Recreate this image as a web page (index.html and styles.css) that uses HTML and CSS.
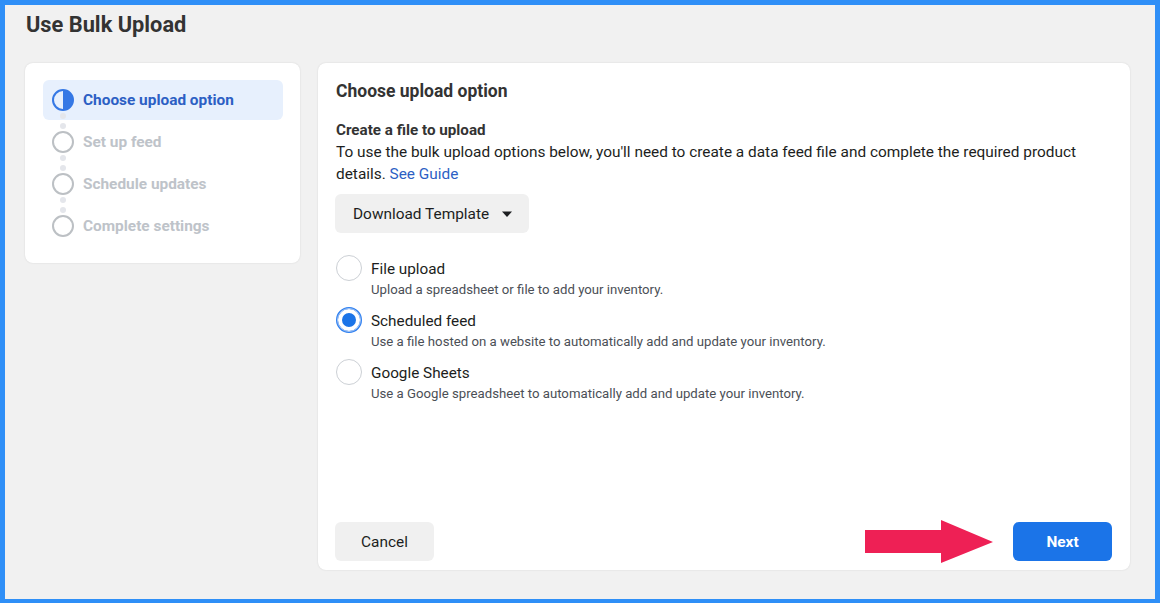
FILE: index.html
```html
<!DOCTYPE html>
<html>
<head>
<meta charset="utf-8">
<link rel="stylesheet" href="styles.css">
</head>
<body>
<div class="frame">
  <h1 class="page-title">Use Bulk Upload</h1>
  <div class="layout">
    <aside class="card steps">
      <div class="step active">
        <svg class="step-icon" width="22" height="22" viewBox="0 0 22 22"><circle cx="11" cy="11" r="10" fill="none" stroke="#3578e5" stroke-width="2"/><path d="M11 1 A10 10 0 0 1 11 21 Z" fill="#3578e5"/></svg>
        <span>Choose upload option</span>
      </div>
      <div class="connector"><i></i><i></i></div>
      <div class="step">
        <svg class="step-icon" width="22" height="22" viewBox="0 0 22 22"><circle cx="11" cy="11" r="10" fill="none" stroke="#bcc0c4" stroke-width="2"/></svg>
        <span>Set up feed</span>
      </div>
      <div class="connector"><i></i><i></i></div>
      <div class="step">
        <svg class="step-icon" width="22" height="22" viewBox="0 0 22 22"><circle cx="11" cy="11" r="10" fill="none" stroke="#bcc0c4" stroke-width="2"/></svg>
        <span>Schedule updates</span>
      </div>
      <div class="connector"><i></i><i></i></div>
      <div class="step">
        <svg class="step-icon" width="22" height="22" viewBox="0 0 22 22"><circle cx="11" cy="11" r="10" fill="none" stroke="#bcc0c4" stroke-width="2"/></svg>
        <span>Complete settings</span>
      </div>
    </aside>
    <main class="card content">
      <div class="content-body">
        <h2 class="section-title">Choose upload option</h2>
        <h3 class="sub-title">Create a file to upload</h3>
        <p class="desc">To use the bulk upload options below, you'll need to create a data feed file and complete the required product details. <span class="link">See Guide</span></p>
        <button class="btn btn-gray dl-btn">Download Template <svg width="12" height="8" viewBox="0 0 12 8"><path d="M1 1.5 L11 1.5 L6 7 Z" fill="#1c1e21"/></svg></button>
        <div class="options">
          <div class="option">
            <span class="radio"></span>
            <div class="opt-text">
              <div class="opt-label">File upload</div>
              <div class="opt-desc">Upload a spreadsheet or file to add your inventory.</div>
            </div>
          </div>
          <div class="option">
            <span class="radio checked"></span>
            <div class="opt-text">
              <div class="opt-label">Scheduled feed</div>
              <div class="opt-desc">Use a file hosted on a website to automatically add and update your inventory.</div>
            </div>
          </div>
          <div class="option">
            <span class="radio"></span>
            <div class="opt-text">
              <div class="opt-label">Google Sheets</div>
              <div class="opt-desc">Use a Google spreadsheet to automatically add and update your inventory.</div>
            </div>
          </div>
        </div>
      </div>
      <div class="footer">
        <button class="btn btn-gray btn-wide">Cancel</button>
        <div class="next-wrap">
          <svg class="arrow" width="128" height="43" viewBox="0 0 128 43"><path d="M0 10 L76 10 L76 0 L128 22 L76 43 L76 33 L0 33 Z" fill="#ee2055"/></svg>
          <button class="btn btn-blue btn-wide">Next</button>
        </div>
      </div>
    </main>
  </div>
</div>
</body>
</html>
```

FILE: styles.css
```css
* { box-sizing: border-box; }
html, body { margin: 0; padding: 0; }
body {
  width: 1160px;
  height: 603px;
  font-family: Roboto, "Liberation Sans", Arial, sans-serif;
  color: #1c1e21;
  overflow: hidden;
}
.frame {
  width: 1160px;
  height: 603px;
  border: 5px solid #2f8ff7;
  border-bottom-width: 4px;
  background: #f1f1f1;
  padding: 7px 25px 29px 20px;
  display: flex;
  flex-direction: column;
}
.page-title {
  margin: 0 0 0 1px;
  font-size: 21.8px;
  line-height: 26px;
  font-weight: 700;
  color: #333;
  height: 51px;
}
.layout {
  flex: 1;
  display: flex;
  gap: 18px;
  align-items: flex-start;
  min-height: 0;
}
.card {
  background: #fff;
  border-radius: 8px;
  box-shadow: 0 0 2px rgba(0,0,0,0.12);
}
.steps {
  width: 275px;
  padding: 17px 17px 17px 18px;
}
.step {
  height: 40px;
  display: flex;
  align-items: center;
  padding-left: 9px;
  gap: 9px;
  border-radius: 6px;
  font-size: 15.4px;
  font-weight: 700;
  color: #bec3c9;
}
.step.active {
  background: #e7f0fd;
  color: #2c5fc4;
}
.step-icon { flex: none; }
.connector {
  position: relative;
  height: 2px;
}
.connector i {
  position: absolute;
  left: 17px;
  width: 6px;
  height: 6px;
  border-radius: 50%;
  background: #e4e6eb;
}
.connector i:first-child { top: -7px; }
.connector i:last-child { top: 3px; }
.content {
  flex: 1;
  align-self: stretch;
  display: flex;
  flex-direction: column;
  padding: 17px 18px 9px 18px;
}
.content-body { flex: 1; }
.section-title {
  margin: 0 0 17px;
  font-size: 17.5px;
  line-height: 22px;
  font-weight: 700;
  color: #333;
}
.sub-title {
  margin: 0;
  font-size: 15.2px;
  line-height: 22px;
  font-weight: 700;
  color: #333;
}
.desc {
  margin: 0 0 9px;
  font-size: 15.4px;
  line-height: 22px;
  color: #1c1e21;
}
.link { color: #2d5fc4; }
.btn {
  border: none;
  border-radius: 6px;
  font-family: inherit;
  height: 39px;
  font-size: 15.4px;
  cursor: pointer;
}
.btn-gray { background: #f0f0f0; color: #1c1e21; }
.btn-blue { background: #1b74e8; color: #fff; font-weight: 700; }
.btn-wide { width: 99px; }
.dl-btn {
  display: inline-flex;
  align-items: center;
  gap: 12px;
  padding: 0 16px 0 18px;
  margin-left: -1px;
}
.options {
  margin-top: 22px;
  display: flex;
  flex-direction: column;
  gap: 6px;
}
.option {
  display: flex;
  align-items: flex-start;
  gap: 9px;
}
.radio {
  flex: none;
  width: 26px;
  height: 26px;
  border-radius: 50%;
  border: 1px solid #ccd0d5;
}
.radio.checked {
  border: 2px solid #2d7ff0;
  box-shadow: inset 0 0 0 4px #fff, inset 0 0 0 12px #1b74e8;
  position: relative;
}
.radio.checked::after {
  content: "";
  position: absolute;
  inset: -1px;
  border-radius: 50%;
  border: 1px solid #aac8f5;
}
.opt-text { padding-top: 4px; }
.opt-label {
  font-size: 15.3px;
  line-height: 20px;
  color: #1c1e21;
}
.opt-desc {
  font-size: 13.2px;
  line-height: 22px;
  color: #4b4f56;
}
.footer {
  display: flex;
  justify-content: space-between;
  align-items: center;
  margin-left: -1px;
}
.next-wrap {
  position: relative;
}
.arrow {
  position: absolute;
  left: -148px;
  top: -2px;
}
```
